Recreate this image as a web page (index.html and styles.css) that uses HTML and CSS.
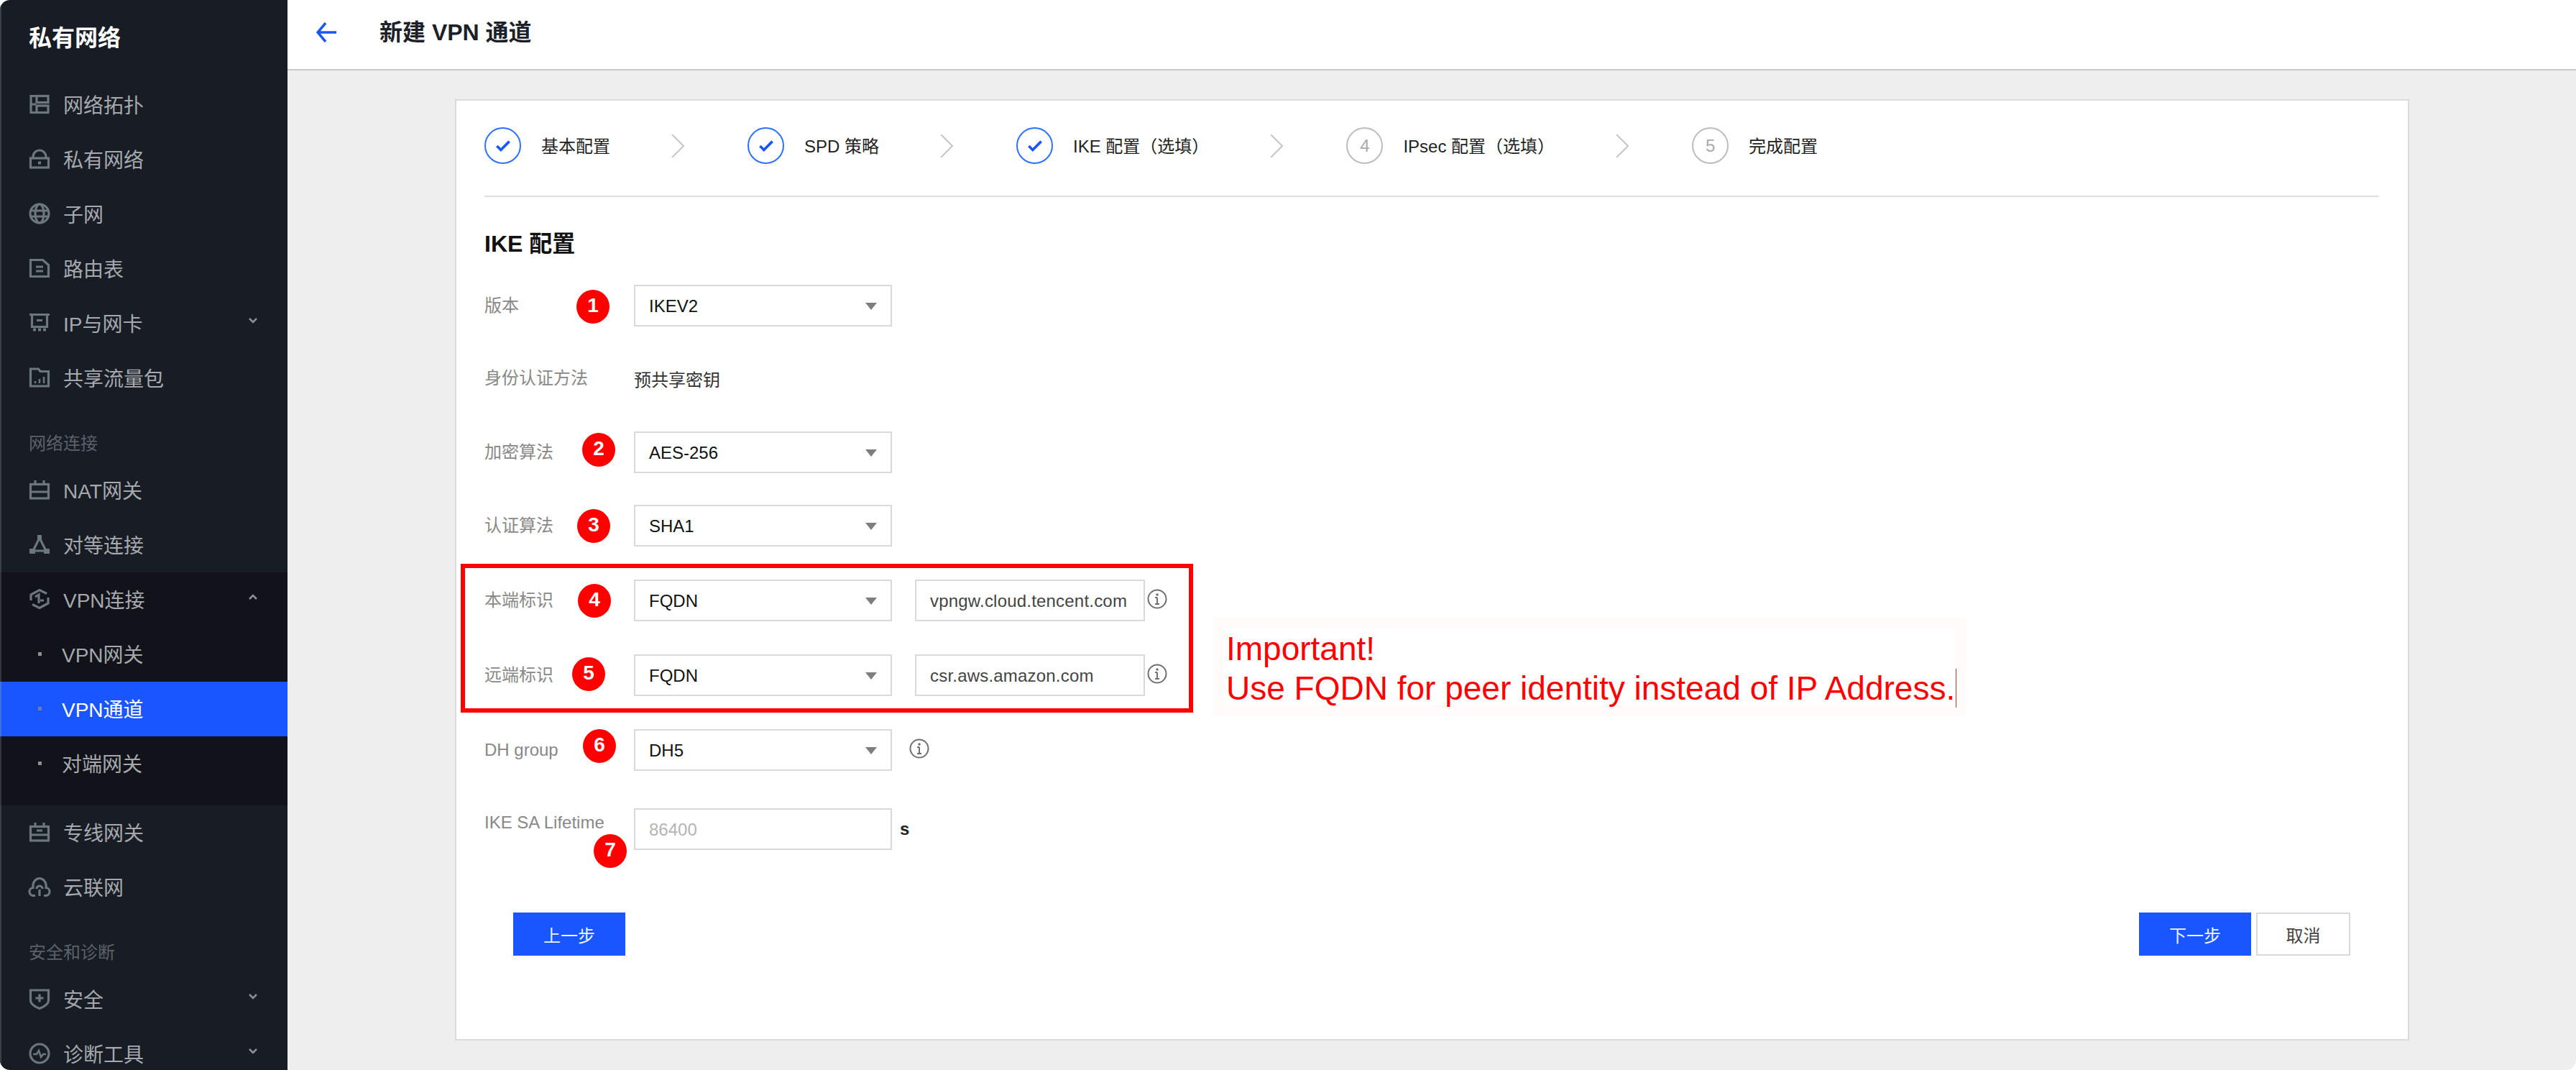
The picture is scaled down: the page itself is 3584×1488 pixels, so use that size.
FILE: index.html
```html
<!DOCTYPE html>
<html lang="zh-CN">
<head>
<meta charset="utf-8">
<title>新建 VPN 通道</title>
<link rel="stylesheet" href="styles.css">
</head>
<body>
<div class="app">
  <aside class="sidebar">
    <div class="brand">私有网络</div>
    <nav class="nav">
      <a class="item"><svg class="ico" viewBox="0 0 28 28"><path d="M2 1v26M2 2.500h7M2 14h7M2 25.500h7"/><rect x="10" y="2.500" width="16" height="9"/><rect x="10" y="16" width="16" height="9.500"/></svg>网络拓扑</a>
      <a class="item"><svg class="ico" viewBox="0 0 28 28"><rect x="1.500" y="13" width="25" height="13"/><path d="M5 13V11a9 9 0 0 1 18 0v2"/><rect class="solid" x="12" y="17.500" width="4" height="4"/></svg>私有网络</a>
      <a class="item"><svg class="ico" viewBox="0 0 28 28"><circle cx="14" cy="14" r="13"/><ellipse cx="14" cy="14" rx="6" ry="13"/><path d="M1 10h26M1 18h26"/></svg>子网</a>
      <a class="item"><svg class="ico" viewBox="0 0 28 28"><path d="M1.500 2.500h17l8 7v16h-25z"/><path d="M9 12h10M9 18h10"/></svg>路由表</a>
      <a class="item"><svg class="ico" viewBox="0 0 28 28"><path d="M0 2.500h28M3.500 2.500v17h21v-17M10 10.500h8"/><path class="dash" d="M5 23.500h18"/></svg>IP与网卡<svg class="chev" viewBox="0 0 12 8"><path d="M1 1l5 5 5-5"/></svg></a>
      <a class="item"><svg class="ico" viewBox="0 0 28 28"><path d="M1.500 2h11l2.500 3.500h11.500v20.500h-25z"/><path class="thin" d="M8 22v-3M14 22v-6M20 22v-9"/></svg>共享流量包</a>
      <div class="group">网络连接</div>
      <a class="item"><svg class="ico" viewBox="0 0 28 28"><rect x="1.500" y="6.500" width="25" height="19.500"/><path d="M1.500 17h25M8 1v6M20 1v6"/></svg>NAT网关</a>
      <a class="item"><svg class="ico" viewBox="0 0 28 28"><path d="M14 5L5 23h18z"/><rect class="solid" x="11" y="1" width="6" height="6"/><rect class="solid" x="0" y="20" width="8" height="7"/><rect class="solid" x="20" y="20" width="8" height="7"/></svg>对等连接</a>
      <div class="submenu">
        <a class="item"><svg class="ico" viewBox="0 0 28 28"><path d="M24 6.500L14 1.500 2 8v8M4 21.500l10 5 12-6.500v-8"/><path d="M8 11l5-3v12M15 16l5 0"/></svg>VPN连接<svg class="chev" viewBox="0 0 12 8"><path d="M1 7l5-5 5 5"/></svg></a>
        <a class="subitem"><span class="dot"></span>VPN网关</a>
        <a class="subitem active"><span class="dot"></span>VPN通道</a>
        <a class="subitem"><span class="dot"></span>对端网关</a>
      </div>
      <a class="item"><svg class="ico" viewBox="0 0 28 28"><rect x="1.500" y="6.500" width="25" height="19.500"/><path d="M1.500 18h25M8 1v6M20 1v6M10 12h8"/></svg>专线网关</a>
      <a class="item"><svg class="ico" viewBox="0 0 28 28"><path d="M8 26.500H6a5 5 0 0 1-1-11c-1-8 4-13 9-13s10 5 9 13a5 5 0 0 1-1 11h-2"/><path d="M14 27v-9M10 17a4 4 0 0 1 8 0"/></svg>云联网</a>
      <div class="group">安全和诊断</div>
      <a class="item"><svg class="ico" viewBox="0 0 28 28"><path d="M1.500 2h25v14c0 6-6 9-12.500 11.500C7.500 25 1.500 22 1.500 16z"/><path d="M14 7.500v11M8.500 13h11"/></svg>安全<svg class="chev" viewBox="0 0 12 8"><path d="M1 1l5 5 5-5"/></svg></a>
      <a class="item"><svg class="ico" viewBox="0 0 28 28"><circle cx="14" cy="14" r="13"/><path class="thin" d="M5 15h5l3-5 3 9 3-4h4"/></svg>诊断工具<svg class="chev" viewBox="0 0 12 8"><path d="M1 1l5 5 5-5"/></svg></a>
    </nav>
  </aside>
  <main class="main">
    <header class="topbar">
      <svg class="back" viewBox="0 0 28 28"><path d="M13 1L2 14l11 13M2 14h26"/></svg>
      <h1 class="page-title">新建 VPN 通道</h1>
    </header>
    <section class="card">
      <div class="steps">
        <div class="step"><span class="circle done"><svg class="check" viewBox="0 0 22 17"><path d="M1.500 8.500l6 6L20.500 1.500"/></svg></span><span class="step-label">基本配置</span></div>
        <svg class="step-sep" viewBox="0 0 18 32"><path d="M1 0l16 16L1 32"/></svg>
        <div class="step"><span class="circle done"><svg class="check" viewBox="0 0 22 17"><path d="M1.500 8.500l6 6L20.500 1.500"/></svg></span><span class="step-label">SPD 策略</span></div>
        <svg class="step-sep" viewBox="0 0 18 32"><path d="M1 0l16 16L1 32"/></svg>
        <div class="step"><span class="circle done"><svg class="check" viewBox="0 0 22 17"><path d="M1.500 8.500l6 6L20.500 1.500"/></svg></span><span class="step-label">IKE 配置（选填）</span></div>
        <svg class="step-sep" viewBox="0 0 18 32"><path d="M1 0l16 16L1 32"/></svg>
        <div class="step"><span class="circle">4</span><span class="step-label">IPsec 配置（选填）</span></div>
        <svg class="step-sep" viewBox="0 0 18 32"><path d="M1 0l16 16L1 32"/></svg>
        <div class="step"><span class="circle">5</span><span class="step-label">完成配置</span></div>
      </div>
      <h2 class="section-title">IKE 配置</h2>
      <div class="form">
        <div class="row"><label class="label">版本</label><div class="select">IKEV2<i class="caret"></i></div></div>
        <div class="row gap-43"><label class="label">身份认证方法</label><div class="value">预共享密钥</div></div>
        <div class="row gap-45"><label class="label">加密算法</label><div class="select">AES-256<i class="caret"></i></div></div>
        <div class="row gap-44"><label class="label">认证算法</label><div class="select">SHA1<i class="caret"></i></div></div>
        <div class="row gap-46"><label class="label">本端标识</label><div class="select">FQDN<i class="caret"></i></div><div class="input">vpngw.cloud.tencent.com</div><svg class="info" viewBox="0 0 28 28"><circle cx="14" cy="14" r="12.500"/><path d="M14 12v9M11 12h3M11 21h6"/><circle class="pt" cx="14" cy="8" r="1.800"/></svg></div>
        <div class="row gap-46"><label class="label">远端标识</label><div class="select">FQDN<i class="caret"></i></div><div class="input">csr.aws.amazon.com</div><svg class="info" viewBox="0 0 28 28"><circle cx="14" cy="14" r="12.500"/><path d="M14 12v9M11 12h3M11 21h6"/><circle class="pt" cx="14" cy="8" r="1.800"/></svg></div>
        <div class="row gap-46"><label class="label">DH group</label><div class="select">DH5<i class="caret"></i></div><svg class="info info-far" viewBox="0 0 28 28"><circle cx="14" cy="14" r="12.500"/><path d="M14 12v9M11 12h3M11 21h6"/><circle class="pt" cx="14" cy="8" r="1.800"/></svg></div>
        <div class="row gap-52"><label class="label label-top">IKE SA Lifetime</label><div class="select placeholder">86400</div><span class="unit">s</span></div>
      </div>
      <div class="actions">
        <button class="btn primary">上一步</button>
        <div class="actions-right">
          <button class="btn primary">下一步</button>
          <button class="btn plain">取消</button>
        </div>
      </div>
      <span class="badge b1">1</span>
      <span class="badge b2">2</span>
      <span class="badge b3">3</span>
      <span class="badge b4">4</span>
      <span class="badge b5">5</span>
      <span class="badge b6">6</span>
      <span class="badge b7">7</span>
      <div class="redbox"></div>
      <div class="note">Important!<br>Use FQDN for peer identity instead of IP Address.<i class="cursor"></i></div>
    </section>
  </main>
</div>
</body>
</html>
```
FILE: styles.css
```css
* { box-sizing: border-box; }
html, body { margin: 0; padding: 0; background: #fff; }
body { font-family: "Liberation Sans", "Noto Sans CJK SC", sans-serif; }
.app { display: flex; width: 3584px; height: 1488px; overflow: hidden; border-radius: 14px; background: #eee; }

.sidebar { width: 400px; flex: none; background: #181c25; box-shadow: inset 2px 0 0 #3b3f47; overflow: hidden; }
.brand { height: 108px; padding: 35px 0 0 40px; font-size: 32px; line-height: 36px; font-weight: 700; color: #fff; }
.nav { display: flex; flex-direction: column; }
.item { display: flex; align-items: center; height: 76px; padding: 0 42px 2px 41px; font-size: 28px; color: #a5a9ad; }
.ico { width: 28px; height: 28px; margin-right: 19px; flex: none; fill: none; stroke: #6c777d; stroke-width: 3.200; overflow: visible; }
.ico .solid { fill: #6c777d; stroke: none; }
.ico .thin { stroke-width: 2.500; }
.ico .dash { stroke-dasharray: 4 3; stroke-width: 4; }
.chev { width: 12px; height: 8px; margin-left: auto; margin-top: -6px; fill: none; stroke: #8a9196; stroke-width: 2.500; }
.group { height: 80px; padding: 39px 0 0 40px; font-size: 24px; line-height: 28px; color: #5c6169; }
.submenu { height: 324px; background: #12131a; box-shadow: inset 2px 0 0 #34373e; }
.subitem { display: flex; align-items: center; height: 76px; padding: 0 0 2px 53px; font-size: 28px; color: #a5a9ad; }
.subitem .dot { width: 5px; height: 5px; margin-right: 28px; background: #8d9196; }
.subitem.active { background: #1a56ff; color: #fff; box-shadow: inset 2px 0 0 #3f6fe0; }
.subitem.active .dot { background: #6f7f9f; }

.main { flex: 1; min-width: 0; }
.topbar { display: flex; align-items: center; height: 98px; padding: 0 0 6px 40px; background: #fff; border-bottom: 2px solid #c9c9c9; }
.back { width: 28px; height: 28px; margin-right: 60px; flex: none; fill: none; stroke: #1a56ff; stroke-width: 3.500; }
.page-title { margin: 0; font-size: 32px; line-height: 40px; font-weight: 700; color: #1c2028; }

.card { position: relative; width: 2719px; height: 1309px; margin: 40px 0 0 233px; padding: 38px 40px 0 39px; background: #fff; border: 2px solid #dadada; }
.steps { display: flex; align-items: center; height: 96px; padding-bottom: 45px; border-bottom: 2px solid #dedede; }
.step { display: flex; align-items: center; flex: none; }
.circle { display: flex; align-items: center; justify-content: center; width: 51px; height: 51px; margin-right: 28px; border: 2px solid #bdbdbd; border-radius: 50%; font-size: 24px; color: #aaa; }
.circle.done { border-color: #2e70ff; }
.check { width: 20px; height: 16px; fill: none; stroke: #1a56ff; stroke-width: 4; }
.step-label { padding-top: 2px; font-size: 24px; line-height: 32px; color: #222; white-space: nowrap; }
.step-sep { width: 18px; height: 32px; margin: 0 88px 0 85px; flex: none; fill: none; stroke: #c6c6c6; stroke-width: 2; }
.section-title { margin: 45px 0 37px; font-size: 32px; line-height: 40px; font-weight: 700; color: #111; }

.row { display: flex; align-items: center; height: 58px; }
.gap-43 { margin-top: 43px; }
.gap-44 { margin-top: 44px; }
.gap-45 { margin-top: 45px; }
.gap-46 { margin-top: 46px; }
.gap-52 { margin-top: 52px; }
.label { width: 208px; flex: none; font-size: 24px; line-height: 32px; color: #888; white-space: nowrap; }
.label-top { align-self: flex-start; line-height: 40px; }
.value { font-size: 24px; color: #333; }
.select { position: relative; display: flex; align-items: center; width: 359px; height: 58px; padding: 2px 0 0 19px; flex: none; background: #fff; border: 2px solid #d9d9d9; font-size: 24px; color: #111; }
.caret { position: absolute; right: 19px; top: 23px; width: 0; height: 0; border-left: 8px solid transparent; border-right: 8px solid transparent; border-top: 10px solid #7d7d7d; }
.input { display: flex; align-items: center; width: 320px; height: 58px; margin-left: 32px; padding: 2px 0 0 19px; flex: none; background: #fff; border: 2px solid #d9d9d9; font-size: 24px; letter-spacing: 0.200px; color: #444; white-space: nowrap; }
.placeholder { color: #b4b4b4; }
.info { width: 28px; height: 28px; margin: -4px 0 0 3px; flex: none; fill: none; stroke: #6f6f6f; stroke-width: 2; }
.info .pt { fill: #6f6f6f; stroke: none; }
.info-far { margin-left: 24px; }
.unit { margin-left: 11px; font-size: 24px; font-weight: 700; color: #222; }

.actions { display: flex; justify-content: space-between; margin-top: 87px; padding: 0 40px; }
.actions-right { display: flex; gap: 7px; }
.btn { height: 60px; padding: 0; border: 0; font: inherit; font-size: 24px; }
.primary { width: 156px; background: #1a56ff; color: #f0f4ff; }
.plain { width: 131px; background: #fff; border: 2px solid #d9d9d9; color: #444; }

.badge { position: absolute; display: flex; align-items: center; justify-content: center; width: 46px; height: 47px; padding-bottom: 4px; border-radius: 50%; background: #f00; color: #fff; font-size: 28px; font-weight: 700; }
.b1 { left: 167px; top: 263px; }
.b2 { left: 175px; top: 462px; }
.b3 { left: 168px; top: 568px; }
.b4 { left: 169px; top: 672px; }
.b5 { left: 161px; top: 774px; }
.b6 { left: 176px; top: 874px; }
.b7 { left: 191px; top: 1020px; }
.redbox { position: absolute; left: 6px; top: 644px; width: 1019px; height: 207px; border: 6px solid #f00; }
.note { position: absolute; left: 1053px; top: 718px; width: 1048px; height: 137px; padding: 2px 0 0 3px; border: 15px solid #fffbfb; font-size: 46px; line-height: 55px; color: #f00; white-space: nowrap; }
.cursor { display: inline-block; width: 1px; height: 54px; margin-left: 1px; vertical-align: -11px; background: #c33; }
```
